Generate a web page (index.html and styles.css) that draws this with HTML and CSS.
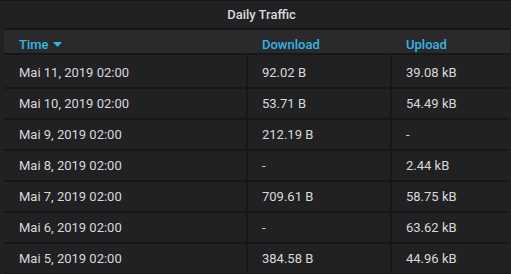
FILE: index.html
```html
<!DOCTYPE html>
<html>
<head>
<meta charset="utf-8">
<link rel="stylesheet" href="styles.css">
</head>
<body>
<div class="panel">
  <div class="panel-title">Daily Traffic</div>
  <table class="traffic">
    <thead>
      <tr>
        <th class="c1">Time<svg class="caret" width="9" height="5" viewBox="0 0 9 5"><path d="M0 0H9L4.5 5Z" fill="#33b5e5"/></svg></th>
        <th class="c2">Download</th>
        <th class="c3">Upload</th>
      </tr>
    </thead>
    <tbody>
      <tr class="first"><td>Mai 11, 2019 02:00</td><td>92.02 B</td><td>39.08 kB</td></tr>
      <tr><td>Mai 10, 2019 02:00</td><td>53.71 B</td><td>54.49 kB</td></tr>
      <tr><td>Mai 9, 2019 02:00</td><td>212.19 B</td><td>-</td></tr>
      <tr><td>Mai 8, 2019 02:00</td><td>-</td><td>2.44 kB</td></tr>
      <tr><td>Mai 7, 2019 02:00</td><td>709.61 B</td><td>58.75 kB</td></tr>
      <tr><td>Mai 6, 2019 02:00</td><td>-</td><td>63.62 kB</td></tr>
      <tr><td>Mai 5, 2019 02:00</td><td>384.58 B</td><td>44.96 kB</td></tr>
    </tbody>
  </table>
</div>
</body>
</html>
```

FILE: styles.css
```css
html, body {
  margin: 0;
  padding: 0;
  background: #161719;
  font-family: Roboto, "Liberation Sans", sans-serif;
  font-size: 13px;
  color: #d8d9da;
  overflow: hidden;
}
.panel {
  margin-top: 1px;
  width: 511px;
  height: 273px;
  overflow: hidden;
  background: #212124;
  padding-left: 4px;
  box-sizing: border-box;
}
.panel-title {
  height: 27px;
  line-height: 27px;
  text-align: center;
  font-weight: 500;
  padding-left: 8px;
  color: #d8d9da;
}
.traffic {
  border-collapse: separate;
  border-spacing: 0;
  width: 506px;
  table-layout: fixed;
  border-top: 2px solid #161719;
}
.traffic th {
  background: #2a2a2d;
  color: #33b5e5;
  font-weight: 500;
  text-align: left;
  vertical-align: top;
  height: 25px;
  padding: 7px 0 0 14px;
  line-height: 15px;
  border-bottom: 2px solid #161719;
  box-sizing: border-box;
}
.traffic th.c1 { width: 244px; padding-left: 15px; }
.traffic th.c2 { width: 144px; }
.traffic th.c3 { width: 118px; }
.caret {
  margin-left: 4px;
  vertical-align: 2px;
}
.traffic td {
  padding: 7.05px 0 7.05px 14px;
  line-height: 15px;
  border-bottom: 2px solid #161719;
  border-right: 2px solid #161719;
  white-space: nowrap;
}
.traffic tr.first td { padding-top: 9.6px; }
.traffic td:first-child { padding-left: 15px; }
.traffic td:last-child { border-right: 0; }
```
